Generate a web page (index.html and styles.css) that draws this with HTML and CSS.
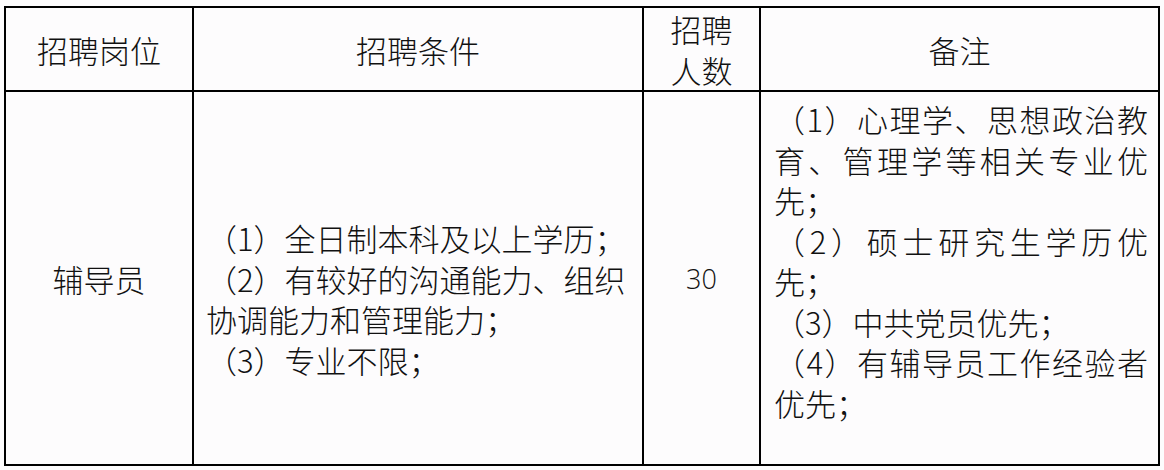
FILE: index.html
```html
<!DOCTYPE html>
<html lang="zh-CN">
<head>
<meta charset="utf-8">
<title>招聘岗位</title>
<link rel="stylesheet" href="styles.css">
</head>
<body>
<table class="jobs">
  <colgroup>
    <col class="c1">
    <col class="c2">
    <col class="c3">
    <col class="c4">
  </colgroup>
  <tr class="head">
    <td>招聘岗位</td>
    <td>招聘条件</td>
    <td class="narrow">招聘人数</td>
    <td>备注</td>
  </tr>
  <tr class="data">
    <td class="center">辅导员</td>
    <td class="cond">
      <p>（1）全日制本科及以上学历；</p>
      <p>（2）有较好的沟通能力、组织协调能力和管理能力；</p>
      <p>（3）专业不限；</p>
    </td>
    <td class="center num">30</td>
    <td class="note">
      <p>（1）心理学、思想政治教育、管理学等相关专业优先；</p>
      <p>（2）硕士研究生学历优先；</p>
      <p>（3）中共党员优先；</p>
      <p>（4）有辅导员工作经验者优先；</p>
    </td>
  </tr>
</table>
</body>
</html>
```

FILE: styles.css
```css
html, body {
  margin: 0;
  padding: 0;
  background: #fdfcfd;
}

.jobs {
  margin: 6px 0 0 4px;
  width: 1156px;
  table-layout: fixed;
  border-collapse: collapse;
  font-family: "Noto Sans CJK SC", "Noto Sans", sans-serif;
  font-size: 31px;
  font-weight: 300;
  color: #111;
}

.c1 { width: 188px; }
.c2 { width: 450px; }
.c3 { width: 117px; }
.c4 { width: 399px; }

.jobs td {
  border: 2px solid #000;
  padding: 0;
  vertical-align: middle;
}

.jobs p {
  margin: 0;
}

.jobs .head {
  height: 83px;
}

.jobs .head td {
  text-align: center;
  line-height: 41px;
}

.jobs .head .narrow {
  padding: 0 16px;
}

.jobs .data {
  height: 374px;
}

.jobs .center {
  text-align: center;
}

.jobs .num {
  font-family: "Open Sans", "Noto Sans", sans-serif;
  font-size: 27px;
}

.jobs .cond {
  padding: 42px 0 0 12px;
  line-height: 40.5px;
  text-align: left;
}

.jobs .note {
  vertical-align: top;
  padding: 7px 10px 0 13px;
  line-height: 40.5px;
  text-align: justify;
}
```
